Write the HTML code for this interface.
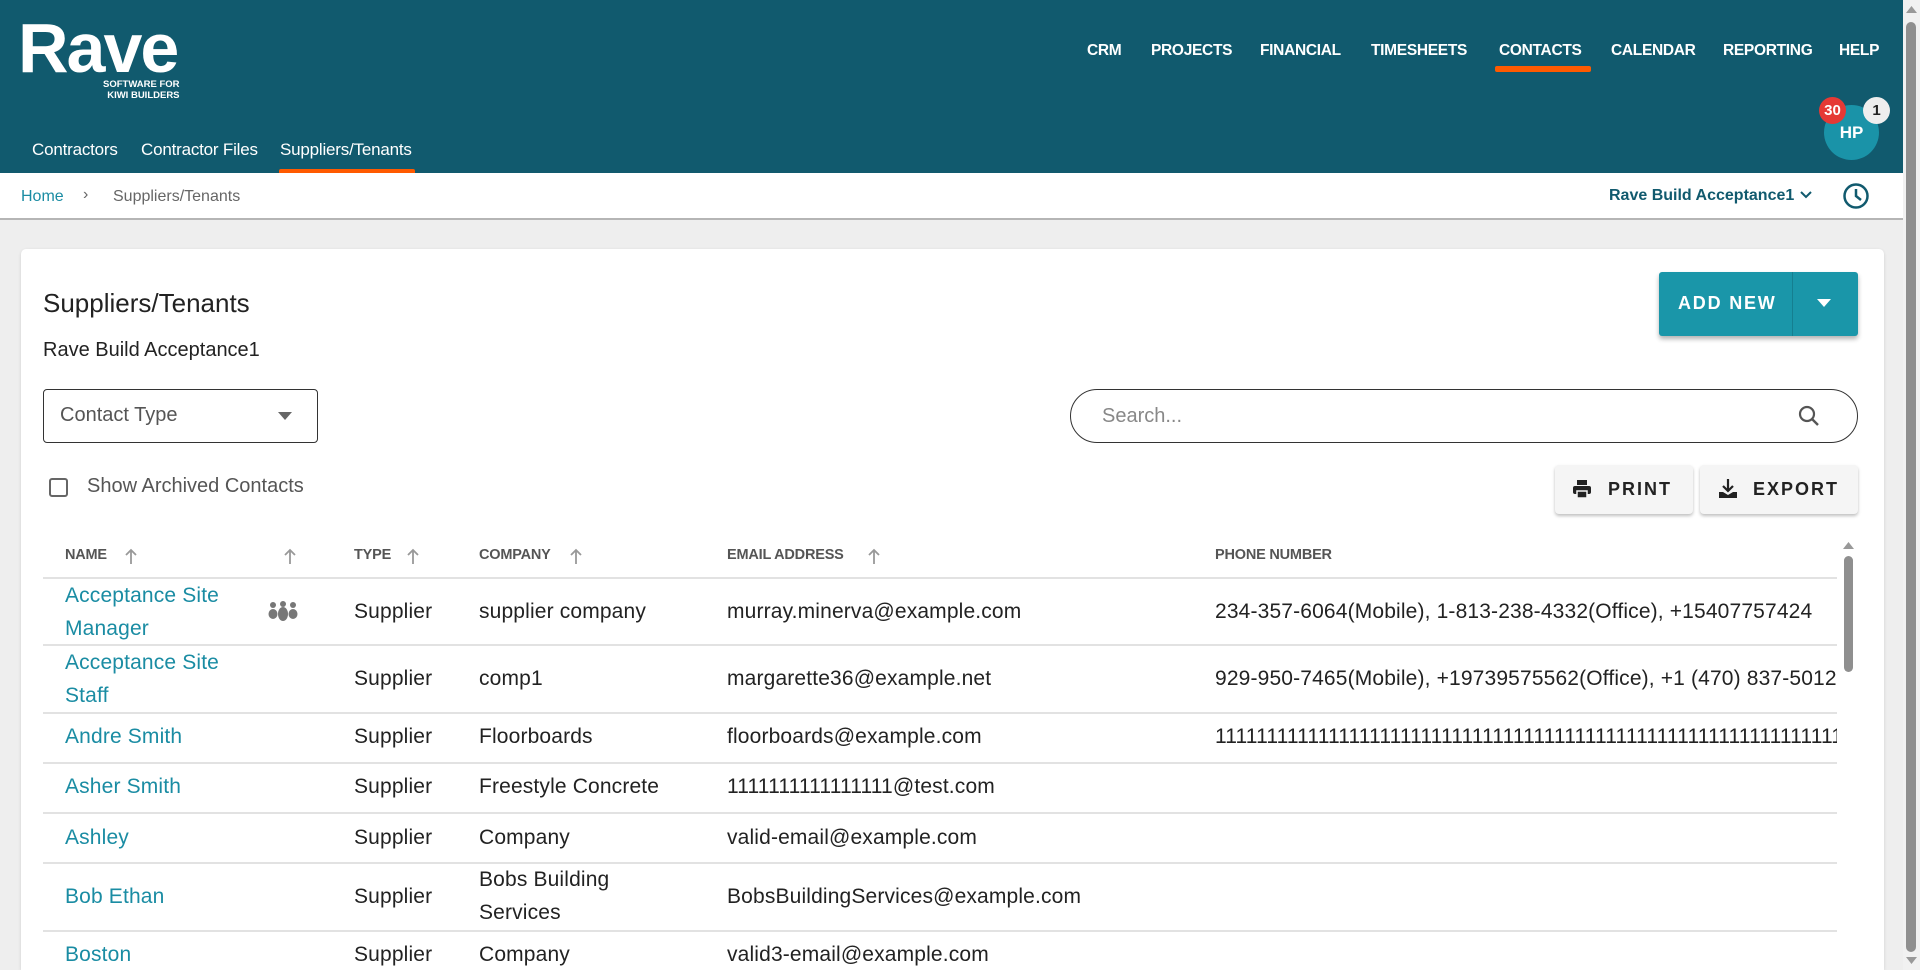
<!DOCTYPE html>
<html style="overflow:hidden;height:970px"><head><meta charset="utf-8"><style>
*{box-sizing:border-box;margin:0;padding:0}
body{width:1920px;height:970px;overflow:hidden;background:#eeeeee;font-family:"Liberation Sans",Arial,sans-serif;position:relative;color:#222}
.a{position:absolute;white-space:nowrap}
#hdr{position:absolute;left:0;top:0;width:1903px;height:173px;background:#115a6e}
.nav{position:absolute;top:42px;color:#fff;font-weight:bold;font-size:15.5px;letter-spacing:-0.3px}
.sub{position:absolute;top:140px;color:#fff;font-size:17px;letter-spacing:-0.2px}
#bc{position:absolute;left:0;top:173px;width:1903px;height:47px;background:#fff;border-bottom:2px solid #b5b5b5}
#card{position:absolute;left:21px;top:249px;width:1863px;height:721px;background:#fff;border-radius:5px 5px 0 0;box-shadow:0 1px 3px rgba(0,0,0,.12)}
.th{position:absolute;top:547px;font-weight:bold;font-size:14.5px;color:#555;letter-spacing:-0.2px}
.arr{position:absolute;top:547px}
.td{position:absolute;font-size:21px;color:#222;white-space:nowrap;line-height:33px;letter-spacing:0.15px}
.lk{color:#1a8ca3}
.sep{position:absolute;left:43px;width:1794px;height:2px;background:#e2e2e2}
.btn{position:absolute;background:#f5f5f5;border-radius:4px;box-shadow:0 2px 3px rgba(0,0,0,.25);font-size:18px;font-weight:bold;letter-spacing:2px;color:#222}
</style></head><body>
<div id="hdr">
  <div class="a" style="left:18px;top:8px;color:#fff;font-size:70px;font-weight:bold;letter-spacing:-2px;line-height:80px">Rave</div>
  <div class="a" style="left:103px;top:79px;color:#fff;font-size:9.5px;font-weight:bold;line-height:11px;text-align:right">SOFTWARE FOR<br>KIWI BUILDERS</div>
  <div class="nav" style="left:1087px">CRM</div>
  <div class="nav" style="left:1151px">PROJECTS</div>
  <div class="nav" style="left:1260px">FINANCIAL</div>
  <div class="nav" style="left:1371px">TIMESHEETS</div>
  <div class="nav" style="left:1499px">CONTACTS</div>
  <div class="nav" style="left:1611px">CALENDAR</div>
  <div class="nav" style="left:1723px">REPORTING</div>
  <div class="nav" style="left:1839px">HELP</div>
  <div class="a" style="left:1495px;top:66px;width:96px;height:6px;background:#ff5a00;border-radius:2px"></div>
  <div class="sub" style="left:32px">Contractors</div>
  <div class="sub" style="left:141px">Contractor Files</div>
  <div class="sub" style="left:280px">Suppliers/Tenants</div>
  <div class="a" style="left:279px;top:169px;width:136px;height:7px;background:#ff5a00;border-radius:2px"></div>
  <div class="a" style="left:1824px;top:105px;width:55px;height:55px;border-radius:50%;background:#1a93a8;color:#fff;font-weight:bold;font-size:17px;text-align:center;line-height:55px">HP</div>
  <div class="a" style="left:1819px;top:97px;width:27px;height:27px;border-radius:50%;background:#e53935;color:#fff;font-weight:bold;font-size:15px;text-align:center;line-height:27px">30</div>
  <div class="a" style="left:1863px;top:97px;width:27px;height:27px;border-radius:50%;background:#eee;color:#222;font-weight:bold;font-size:15px;text-align:center;line-height:27px">1</div>
</div>
<div id="bc">
  <div class="a" style="left:21px;top:15px;color:#1a8ca3;font-size:16px">Home</div>
  <div class="a" style="left:83px;top:13px;color:#666;font-size:16px">›</div>
  <div class="a" style="left:113px;top:15px;color:#666;font-size:16px">Suppliers/Tenants</div>
  <div class="a" style="left:1609px;top:14px;color:#115a6e;font-size:16px;font-weight:bold">Rave Build Acceptance1</div>
  <svg class="a" style="left:1799px;top:17px" width="14" height="10" viewBox="0 0 14 10"><path d="M2 2l5 5 5-5" fill="none" stroke="#115a6e" stroke-width="2"/></svg>
  <svg class="a" style="left:1842px;top:9px" width="28" height="28" viewBox="0 0 28 28"><circle cx="14" cy="14" r="11.5" fill="none" stroke="#115a6e" stroke-width="2.5"/><path d="M14 7v7l5 4" fill="none" stroke="#115a6e" stroke-width="2.5"/></svg>
</div>
<div id="card"></div>
<div class="a" style="left:43px;top:288px;font-size:26px;color:#222">Suppliers/Tenants</div>
<div class="a" style="left:43px;top:339px;font-size:20px;color:#222">Rave Build Acceptance1</div>
<div class="a" style="left:1659px;top:272px;width:199px;height:64px;background:#1a96a9;border-radius:3px;box-shadow:0 3px 5px rgba(0,0,0,.3)">
  <div class="a" style="left:19px;top:21px;color:#fff;font-weight:bold;font-size:18px;letter-spacing:1.8px">ADD NEW</div>
  <div class="a" style="left:133px;top:0;width:1px;height:64px;background:#157f90"></div>
  <svg class="a" style="left:158px;top:27px" width="14" height="10"><path d="M0 0h14L7 8z" fill="#fff"/></svg>
</div>
<div class="a" style="left:43px;top:389px;width:275px;height:54px;border:1.5px solid #333;border-radius:4px">
  <div class="a" style="left:16px;top:14px;font-size:20px;color:#555">Contact Type</div>
  <svg class="a" style="left:234px;top:22px" width="14" height="8"><path d="M0 0h14L7 8z" fill="#666"/></svg>
</div>
<div class="a" style="left:1070px;top:389px;width:788px;height:54px;border:1.5px solid #333;border-radius:27px">
  <div class="a" style="left:31px;top:15px;font-size:20px;color:#888">Search...</div>
  <svg class="a" style="left:726px;top:14px" width="24" height="24" viewBox="0 0 24 24"><circle cx="10" cy="10" r="7" fill="none" stroke="#555" stroke-width="2.2"/><path d="M15 15l6 6" stroke="#555" stroke-width="2.4"/></svg>
</div>
<div class="a" style="left:49px;top:478px;width:19px;height:19px;border:2px solid #666;border-radius:3px"></div>
<div class="a" style="left:87px;top:475px;font-size:20px;color:#555">Show Archived Contacts</div>
<div class="btn" style="left:1555px;top:465px;width:138px;height:49px">
  <svg class="a" style="left:17px;top:14px" width="20" height="20" viewBox="0 0 20 20"><rect x="5" y="1" width="10" height="5" fill="#222"/><rect x="1" y="7" width="18" height="8" rx="2" fill="#222"/><rect x="5" y="12" width="10" height="7" fill="#222" stroke="#f5f5f5" stroke-width="1.5"/></svg>
  <div class="a" style="left:53px;top:14px">PRINT</div>
</div>
<div class="btn" style="left:1700px;top:465px;width:158px;height:49px">
  <svg class="a" style="left:18px;top:13px" width="20" height="22" viewBox="0 0 20 22"><path d="M10 1v11M5 8l5 5 5-5" fill="none" stroke="#222" stroke-width="2.2"/><path d="M1 14v6h18v-6h-4l-5 3-5-3z" fill="#222"/></svg>
  <div class="a" style="left:53px;top:14px">EXPORT</div>
</div>
<div class="th" style="left:65px">NAME</div>
<div class="th" style="left:354px">TYPE</div>
<div class="th" style="left:479px">COMPANY</div>
<div class="th" style="left:727px">EMAIL ADDRESS</div>
<div class="th" style="left:1215px">PHONE NUMBER</div>
<svg class="arr" style="left:124px" width="14" height="18" viewBox="0 0 14 18"><path d="M7 17V3M2 8l5-5 5 5" fill="none" stroke="#999" stroke-width="1.8"/></svg>
<svg class="arr" style="left:283px" width="14" height="18" viewBox="0 0 14 18"><path d="M7 17V3M2 8l5-5 5 5" fill="none" stroke="#999" stroke-width="1.8"/></svg>
<svg class="arr" style="left:406px" width="14" height="18" viewBox="0 0 14 18"><path d="M7 17V3M2 8l5-5 5 5" fill="none" stroke="#999" stroke-width="1.8"/></svg>
<svg class="arr" style="left:569px" width="14" height="18" viewBox="0 0 14 18"><path d="M7 17V3M2 8l5-5 5 5" fill="none" stroke="#999" stroke-width="1.8"/></svg>
<svg class="arr" style="left:867px" width="14" height="18" viewBox="0 0 14 18"><path d="M7 17V3M2 8l5-5 5 5" fill="none" stroke="#999" stroke-width="1.8"/></svg>
<div class="sep" style="top:577px"></div>
<div class="sep" style="top:644px"></div>
<div class="sep" style="top:712px"></div>
<div class="sep" style="top:762px"></div>
<div class="sep" style="top:812px"></div>
<div class="sep" style="top:862px"></div>
<div class="sep" style="top:930px"></div>
<div style="position:absolute;left:0;top:0;width:1837px;height:970px;overflow:hidden">
<div class="td lk" style="left:65px;top:579px">Acceptance Site<br>Manager</div>
<svg class="a" style="left:268px;top:601px" width="30" height="20" viewBox="0 0 30 20"><g fill="#777"><circle cx="5" cy="4" r="3"/><circle cx="15" cy="3" r="3"/><circle cx="25" cy="4" r="3"/><ellipse cx="5" cy="13" rx="4.5" ry="5"/><ellipse cx="25" cy="13" rx="4.5" ry="5"/><ellipse cx="15" cy="13" rx="5" ry="7"/></g></svg>
<div class="td" style="left:354px;top:595px">Supplier</div>
<div class="td" style="left:479px;top:595px">supplier company</div>
<div class="td" style="left:727px;top:595px">murray.minerva@example.com</div>
<div class="td" style="left:1215px;top:595px">234-357-6064(Mobile), 1-813-238-4332(Office), +15407757424</div>
<div class="td lk" style="left:65px;top:646px">Acceptance Site<br>Staff</div>
<div class="td" style="left:354px;top:662px">Supplier</div>
<div class="td" style="left:479px;top:662px">comp1</div>
<div class="td" style="left:727px;top:662px">margarette36@example.net</div>
<div class="td" style="left:1215px;top:662px">929-950-7465(Mobile), +19739575562(Office), +1 (470) 837-5012</div>
<div class="td lk" style="left:65px;top:720px">Andre Smith</div>
<div class="td" style="left:354px;top:720px">Supplier</div>
<div class="td" style="left:479px;top:720px">Floorboards</div>
<div class="td" style="left:727px;top:720px">floorboards@example.com</div>
<div class="td" style="left:1215px;top:720px">1111111111111111111111111111111111111111111111111111111111111</div>
<div class="td lk" style="left:65px;top:770px">Asher Smith</div>
<div class="td" style="left:354px;top:770px">Supplier</div>
<div class="td" style="left:479px;top:770px">Freestyle Concrete</div>
<div class="td" style="left:727px;top:770px">1111111111111111@test.com</div>
<div class="td lk" style="left:65px;top:821px">Ashley</div>
<div class="td" style="left:354px;top:821px">Supplier</div>
<div class="td" style="left:479px;top:821px">Company</div>
<div class="td" style="left:727px;top:821px">valid-email@example.com</div>
<div class="td lk" style="left:65px;top:880px">Bob Ethan</div>
<div class="td" style="left:354px;top:880px">Supplier</div>
<div class="td" style="left:479px;top:863px">Bobs Building<br>Services</div>
<div class="td" style="left:727px;top:880px">BobsBuildingServices@example.com</div>
<div class="td lk" style="left:65px;top:938px">Boston</div>
<div class="td" style="left:354px;top:938px">Supplier</div>
<div class="td" style="left:479px;top:938px">Company</div>
<div class="td" style="left:727px;top:938px">valid3-email@example.com</div>
</div>
<svg class="a" style="left:1842px;top:540px" width="13" height="10"><path d="M1 9h11L6.5 2z" fill="#999"/></svg>
<div class="a" style="left:1844px;top:556px;width:9px;height:116px;background:#8f8f8f;border-radius:5px"></div>
<div class="a" style="left:1903px;top:0;width:17px;height:970px;background:#f1f1f1"></div>
<svg class="a" style="left:1905px;top:4px" width="13" height="10"><path d="M1 9h11L6.5 2z" fill="#999"/></svg>
<div class="a" style="left:1906px;top:22px;width:10px;height:930px;background:#8f8f8f;border-radius:5px"></div>
<svg class="a" style="left:1905px;top:956px" width="13" height="10"><path d="M1 1h11L6.5 8z" fill="#999"/></svg>
</body></html>
